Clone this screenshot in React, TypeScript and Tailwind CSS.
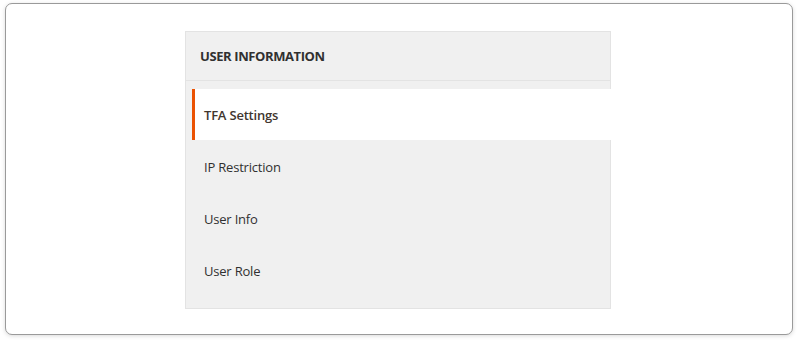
import { useState } from 'react';

const tabs = ['TFA Settings', 'IP Restriction', 'User Info', 'User Role'];

const App = () => {
  const [active, setActive] = useState(0);

  return (
    <div className="min-h-[343px] w-[798px] bg-white pt-[3px] pl-[5px] font-['Open_Sans',sans-serif]">
      {/* Outer card */}
      <div className="w-[788px] h-[332px] rounded-[7px] border border-[#9a9a9a] bg-white shadow-[0_1px_4px_rgba(0,0,0,0.15)] pt-[27px] pl-[179px]">
        {/* Side nav */}
        <div className="w-[426px] border border-[#e3e3e3] bg-[#f0f0f0]">
          <div className="h-[49px] border-b border-[#e3e3e3] pl-[14px] pt-[2px] flex items-center">
            <span className="text-[13px] font-bold uppercase text-[#303030] tracking-[-0.4px]">User Information</span>
          </div>
          <ul className="pt-[8px] pb-[11px]">
            {tabs.map((tab, i) => (
              <li key={tab}>
                <button
                  onClick={() => setActive(i)}
                  className={
                    i === active
                      ? 'w-[419px] ml-[6px] -mr-px h-[51px] mb-px flex items-center bg-white border-l-[3px] border-[#eb5202] pl-[9px] pt-[2px] text-left text-[13px] font-semibold tracking-[-0.2px] text-[#41362f]'
                      : 'w-full h-[52px] flex items-center pl-[18px] pt-px text-left text-[13px] tracking-[-0.2px] text-[#303030]'
                  }
                >
                  {tab}
                </button>
              </li>
            ))}
          </ul>
        </div>
      </div>
    </div>
  );
};

export default App;
